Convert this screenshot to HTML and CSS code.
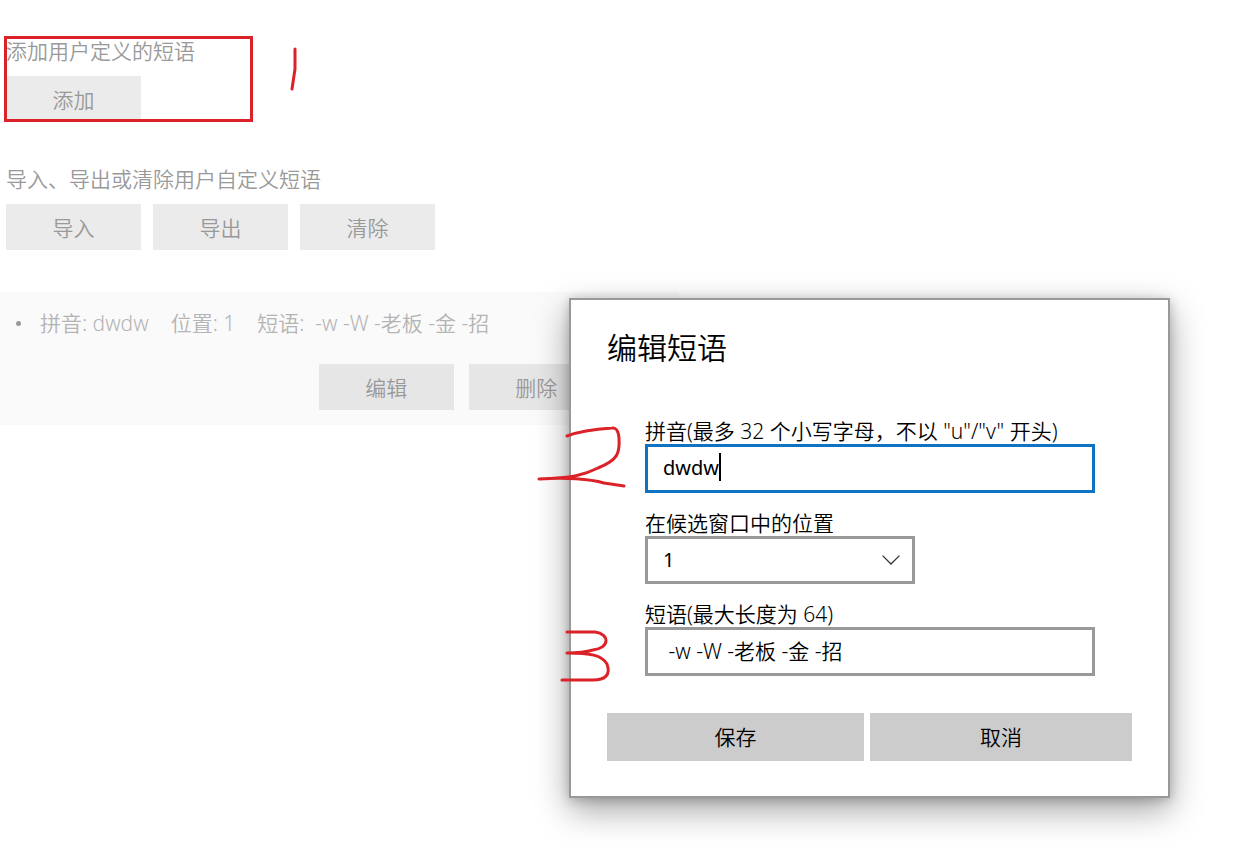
FILE: index.html
```html
<!DOCTYPE html>
<html lang="zh-CN">
<head>
<meta charset="utf-8">
<title>用户定义的短语</title>
<link rel="stylesheet" href="styles.css">
</head>
<body>
<main class="page">
  <section class="group">
    <h2 class="group-title">添加用户定义的短语</h2>
    <div class="button-row"><button class="btn" type="button">添加</button></div>
  </section>
  <section class="group">
    <h2 class="group-title">导入、导出或清除用户自定义短语</h2>
    <div class="button-row">
      <button class="btn" type="button">导入</button>
      <button class="btn" type="button">导出</button>
      <button class="btn" type="button">清除</button>
    </div>
  </section>
  <ul class="phrases">
    <li class="phrase">
      <div class="phrase-info">
        <span class="bullet"></span>
        <span>拼音: dwdw</span>
        <span>位置: 1</span>
        <span class="phrase-text">短语:  -w -W -老板 -金 -招</span>
      </div>
      <div class="phrase-actions">
        <button class="btn" type="button">编辑</button>
        <button class="btn" type="button">删除</button>
      </div>
    </li>
  </ul>
</main>

<form class="dialog" role="dialog" aria-labelledby="dialog-title">
  <h1 class="dialog-title" id="dialog-title">编辑短语</h1>
  <div class="fields">
    <div class="field">
      <label for="pinyin">拼音(最多 32 个小写字母，不以 "u"/"v" 开头)</label>
      <div class="control">
        <input class="box active" id="pinyin" type="text" value="dwdw">
        <span class="caret"></span>
      </div>
    </div>
    <div class="field">
      <label for="position">在候选窗口中的位置</label>
      <div class="control short">
        <select class="box" id="position"><option>1</option></select>
        <svg class="chevron" viewBox="0 0 18 10" aria-hidden="true"><path d="M.6.6 9 9 17.400.6"/></svg>
      </div>
    </div>
    <div class="field">
      <label for="phrase">短语(最大长度为 64)</label>
      <div class="control"><input class="box phrase-box" id="phrase" type="text" value=" -w -W -老板 -金 -招"></div>
    </div>
  </div>
  <div class="dialog-actions">
    <button class="dialog-btn" type="button">保存</button>
    <button class="dialog-btn" type="button">取消</button>
  </div>
</form>

<svg class="marks" width="660" height="700" viewBox="0 0 660 700" aria-hidden="true">
  <rect x="5.500" y="37.500" width="246" height="83"/>
  <g stroke-linejoin="round">
    <path d="M295 49V69L292 89"/>
    <path d="M567 436C580 431 597 429 612 428Q618 427 619 438C620 453 618 460 598 468C584 475 573 478 539 479C565 477 590 479 604 483L624 486"/>
    <path d="M567 632H595C610 634 610 648 593 650C586 652 576 653 567 653C590 653 602 655 607 664C611 675 605 680 593 680H562"/>
  </g>
</svg>
</body>
</html>
```
FILE: styles.css
```css
* {
  box-sizing: border-box;
}

body {
  position: relative;
  min-height: 100vh;
  margin: 0;
  background: #fff;
  color: #000;
  font: 350 21px/28px "Noto Sans", "Noto Sans CJK SC", sans-serif;
}

button,
input,
select {
  font: inherit;
  color: inherit;
  border: 0;
  border-radius: 0;
}

.page {
  padding-top: 37px;
  color: #999;
}

.group {
  padding-left: 6px;
  margin-bottom: 43px;
}

.group-title {
  margin: 0 0 11px;
  font-size: 21px;
  font-weight: 350;
}

.button-row {
  display: flex;
  gap: 12px;
}

.btn {
  width: 135px;
  height: 46px;
  padding: 2px 0 0;
  background: #ebebeb;
}

.phrases {
  list-style: none;
  width: 54%;
  margin: -1px 0 0;
  padding: 0;
  background: #fafafa;
}

.phrase {
  padding: 17px 75px 15px 16px;
}

.phrase-info {
  display: flex;
  align-items: center;
  gap: 22px;
  color: #b4b4b4;
  white-space: nowrap;
}

.bullet {
  width: 5px;
  height: 5px;
  margin-right: -3px;
  border-radius: 50%;
  background: #999;
}

.phrase-text {
  white-space: pre;
}

.phrase-actions {
  display: flex;
  justify-content: flex-end;
  gap: 15px;
  margin-top: 27px;
}

.phrase-actions .btn {
  background: #e6e6e6;
}

.dialog {
  position: absolute;
  top: 298px;
  right: 87px;
  width: 601px;
  padding: 28px 36px 35px;
  border: 2px solid #999;
  background: #fff;
  box-shadow: 0 12px 32px rgba(0, 0, 0, 0.36), 0 2px 10px rgba(0, 0, 0, 0.2);
}

.dialog-title {
  margin: 0 0 50px;
  font-size: 30px;
  font-weight: 350;
  line-height: 40px;
}

.fields {
  display: grid;
  gap: 17px;
  padding: 0 37px 0 38px;
}

.field label {
  display: block;
  line-height: 26px;
}

.control {
  position: relative;
}

.short {
  width: 270px;
}

.box {
  display: block;
  width: 100%;
  height: 49px;
  padding: 0 15px 2px;
  border: 3px solid #999;
  background: #fff;
  outline: 0;
  appearance: none;
  font-size: 20px;
  font-weight: 400;
}

select.box {
  height: 48px;
  padding-bottom: 0;
}

.box.phrase-box {
  padding-bottom: 4px;
  font-size: 21px;
  font-weight: 350;
}

.active {
  border-color: #0f73c4;
}

.caret {
  position: absolute;
  top: 9px;
  left: 74px;
  width: 2px;
  height: 28px;
  background: #000;
}

.chevron {
  position: absolute;
  top: 19px;
  right: 15px;
  width: 18px;
  height: 10px;
  fill: none;
  stroke: #333;
  stroke-width: 1.3;
  pointer-events: none;
}

.dialog-actions {
  display: grid;
  grid-template-columns: 257fr 262fr;
  gap: 6px;
  margin-top: 37px;
}

.dialog-btn {
  height: 48px;
  padding: 0;
  background: #ccc;
}

.marks {
  position: absolute;
  top: 0;
  left: 0;
  fill: none;
  stroke: #dc2229;
  stroke-width: 3;
  stroke-linecap: round;
  pointer-events: none;
}
```
